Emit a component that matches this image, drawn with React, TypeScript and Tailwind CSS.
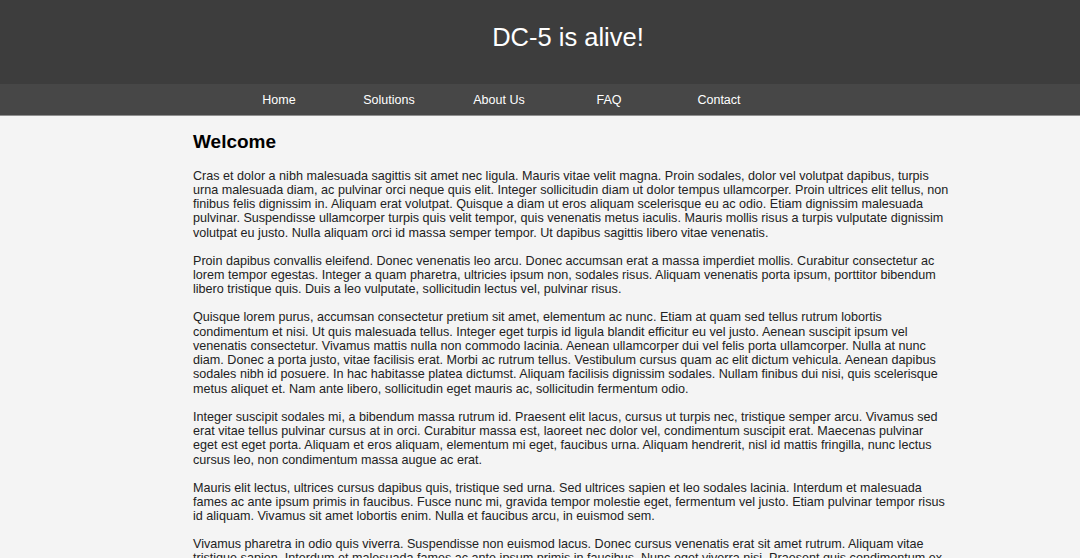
const paragraphs = [
  'Cras et dolor a nibh malesuada sagittis sit amet nec ligula. Mauris vitae velit magna. Proin sodales, dolor vel volutpat dapibus, turpis urna malesuada diam, ac pulvinar orci neque quis elit. Integer sollicitudin diam ut dolor tempus ullamcorper. Proin ultrices elit tellus, non finibus felis dignissim in. Aliquam erat volutpat. Quisque a diam ut eros aliquam scelerisque eu ac odio. Etiam dignissim malesuada pulvinar. Suspendisse ullamcorper turpis quis velit tempor, quis venenatis metus iaculis. Mauris mollis risus a turpis vulputate dignissim volutpat eu justo. Nulla aliquam orci id massa semper tempor. Ut dapibus sagittis libero vitae venenatis.',
  'Proin dapibus convallis eleifend. Donec venenatis leo arcu. Donec accumsan erat a massa imperdiet mollis. Curabitur consectetur ac lorem tempor egestas. Integer a quam pharetra, ultricies ipsum non, sodales risus. Aliquam venenatis porta ipsum, porttitor bibendum libero tristique quis. Duis a leo vulputate, sollicitudin lectus vel, pulvinar risus.',
  'Quisque lorem purus, accumsan consectetur pretium sit amet, elementum ac nunc. Etiam at quam sed tellus rutrum lobortis condimentum et nisi. Ut quis malesuada tellus. Integer eget turpis id ligula blandit efficitur eu vel justo. Aenean suscipit ipsum vel venenatis consectetur. Vivamus mattis nulla non commodo lacinia. Aenean ullamcorper dui vel felis porta ullamcorper. Nulla at nunc diam. Donec a porta justo, vitae facilisis erat. Morbi ac rutrum tellus. Vestibulum cursus quam ac elit dictum vehicula. Aenean dapibus sodales nibh id posuere. In hac habitasse platea dictumst. Aliquam facilisis dignissim sodales. Nullam finibus dui nisi, quis scelerisque metus aliquet et. Nam ante libero, sollicitudin eget mauris ac, sollicitudin fermentum odio.',
  'Integer suscipit sodales mi, a bibendum massa rutrum id. Praesent elit lacus, cursus ut turpis nec, tristique semper arcu. Vivamus sed erat vitae tellus pulvinar cursus at in orci. Curabitur massa est, laoreet nec dolor vel, condimentum suscipit erat. Maecenas pulvinar eget est eget porta. Aliquam et eros aliquam, elementum mi eget, faucibus urna. Aliquam hendrerit, nisl id mattis fringilla, nunc lectus cursus leo, non condimentum massa augue ac erat.',
  'Mauris elit lectus, ultrices cursus dapibus quis, tristique sed urna. Sed ultrices sapien et leo sodales lacinia. Interdum et malesuada fames ac ante ipsum primis in faucibus. Fusce nunc mi, gravida tempor molestie eget, fermentum vel justo. Etiam pulvinar tempor risus id aliquam. Vivamus sit amet lobortis enim. Nulla et faucibus arcu, in euismod sem.',
  'Vivamus pharetra in odio quis viverra. Suspendisse non euismod lacus. Donec cursus venenatis erat sit amet rutrum. Aliquam vitae tristique sapien. Interdum et malesuada fames ac ante ipsum primis in faucibus. Nunc eget viverra nisi. Praesent quis condimentum ex.',
]

const navItems = ['Home', 'Solutions', 'About Us', 'FAQ', 'Contact']

export default function App() {
  return (
    <div className="min-h-screen bg-[#f4f4f4]" style={{ fontFamily: '"Liberation Sans", Arial, sans-serif' }}>
      <header className="h-[84px] bg-[#3d3d3d] flex justify-center pl-[56px] pt-[25px]">
        <h1 className="text-[25.5px] text-white leading-none">DC-5 is alive!</h1>
      </header>

      <nav className="h-[32px] bg-[#474747] border-b border-[#8f8f8f]">
        <ul className="flex h-full items-center ml-[224px] pt-[2px]">
          {navItems.map((item) => (
            <li key={item} className="w-[110px] text-center text-white text-[12.5px]">
              {item}
            </li>
          ))}
        </ul>
      </nav>

      <main className="ml-[193px] w-[757px] pt-[15px]">
        <h2 className="text-[19px] font-bold text-black leading-[21.5px]">Welcome</h2>
        <div className="mt-[16px] flex flex-col gap-[13.7px]">
          {paragraphs.map((p, i) => (
            <p key={i} className="text-[12.6px] leading-[14.3px] text-[#222]">
              {p}
            </p>
          ))}
        </div>
      </main>
    </div>
  )
}
